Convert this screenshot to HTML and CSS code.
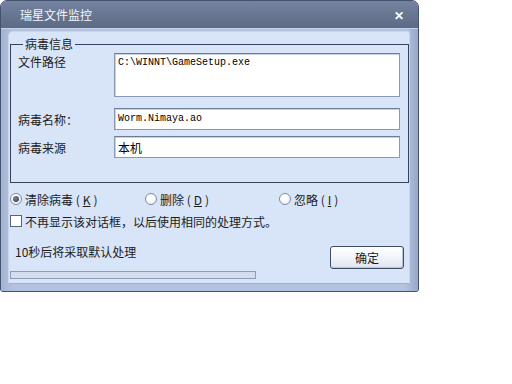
FILE: index.html
```html
<!DOCTYPE html>
<html lang="zh-CN">
<head>
	<meta charset="UTF-8">
	<title>瑞星文件监控</title>
	<link rel="stylesheet" href="styles.css">
</head>
<body>
	<div class="window">
		<div class="titlebar">
			<span class="title">瑞星文件监控</span>
			<span class="close">&#x2715;</span>
		</div>
		<div class="frame">
			<div class="client">

				<fieldset class="group">
					<legend>病毒信息</legend>
					<div class="row first">
						<label>文件路径</label>
						<div class="box tall">C:\WINNT\GameSetup.exe</div>
					</div>
					<div class="row mid">
						<label>病毒名称：</label>
						<div class="box">Worm.Nimaya.ao</div>
					</div>
					<div class="row mid">
						<label>病毒来源</label>
						<div class="box cn">本机</div>
					</div>
				</fieldset>

				<div class="choices">
					<div class="choice"><span class="radio on"></span>清除病毒 (<u>K</u>)</div>
					<div class="choice"><span class="radio"></span>删除 (<u>D</u>)</div>
					<div class="choice"><span class="radio"></span>忽略 (<u>I</u>)</div>
				</div>

				<div class="check"><span class="checkbox"></span>不再显示该对话框，以后使用相同的处理方式。</div>

				<div class="footer">
					<span class="countdown">10秒后将采取默认处理</span>
					<button class="ok">确定</button>
				</div>

				<div class="progress"><div class="fill"></div></div>

			</div>
		</div>
	</div>
</body>
</html>
```

FILE: styles.css
```css
*{margin:0;padding:0;box-sizing:border-box;}
body{background:#fff;font-family:"Noto Sans CJK SC","Noto Sans",sans-serif;font-size:12px;color:#1c1c1c;}

.window{width:419px;height:292px;background:#a9b9d6;border:1px solid #44536d;border-radius:7px 7px 3px 3px;overflow:hidden;display:flex;flex-direction:column;}

.titlebar{height:27px;background:linear-gradient(#7583a0,#5b6a85);display:flex;align-items:center;justify-content:space-between;padding:0 14px 0 19px;flex-shrink:0;}
.title{color:#f4f6fa;font-size:12px;}
.close{color:#fff;font-size:12px;font-weight:bold;}

.frame{flex:1;padding:2px 8px 7px 7px;background:linear-gradient(90deg,#a3b3d1,#b3c2de 3%,#b3c2de 97%,#97a8c8);border-top:1px solid #c4d1e8;}
.client{height:100%;background:#d8e4f8;border-radius:5px 3px 0 0;border:1px solid #c8d5ec;border-bottom-color:#9eafcd;padding:5px 0 0 1px;display:flex;flex-direction:column;}

.group{border:1px solid #34445f;margin:0;padding:2px 7px 24px 7px;width:399px;}
.group legend{margin-left:5px;padding:0 2px;line-height:14px;font-size:12px;}
.row{display:flex;align-items:flex-start;margin-bottom:6px;}
.row.first{margin-bottom:11px;}
.row label{width:96px;line-height:16px;padding-top:1px;}
.row.mid{align-items:center;}
.box{width:286px;height:22px;background:#fff;border:1px solid #8a99b3;border-top-color:#6c7b96;box-shadow:inset 1px 1px 0 #c9d1de;font-family:"Liberation Mono",monospace;font-size:10px;padding:4px 3px 0;color:#000;}
.box.tall{height:44px;padding-top:3px;}
.box.cn{font-family:"Noto Sans CJK SC",sans-serif;font-size:12px;padding-top:2px;}
.row:last-child{margin-bottom:0;}

.choices{display:flex;margin-top:8px;height:16px;align-items:center;}
.choice{display:flex;align-items:center;gap:3px;}
.choice:nth-child(1){width:135px;}
.choice:nth-child(2){width:134px;}
.choice u{text-decoration:underline;}
.radio{width:12px;height:12px;border-radius:50%;border:1px solid #7d8ba5;background:radial-gradient(circle at 40% 35%,#fff 30%,#dfe4ec);position:relative;}
.radio.on::after{content:"";position:absolute;left:2px;top:2px;width:6px;height:6px;border-radius:50%;background:radial-gradient(circle at 40% 35%,#7d8797,#2c3441);}

.check{display:flex;align-items:center;gap:3px;margin-top:6px;height:16px;}
.checkbox{width:12px;height:12px;border:1px solid #55647e;background:#fff;}

.footer{display:flex;justify-content:space-between;align-items:flex-start;margin-top:17px;padding:0 5px 0 5px;}
.countdown{line-height:12px;}
.ok{width:74px;height:23px;border:1px solid #3d4c67;border-radius:3px;background:linear-gradient(#fff,#f1f4f9 50%,#dde4f0);font-family:"Noto Sans CJK SC",sans-serif;font-size:12px;color:#1c1c1c;box-shadow:inset -1px -1px 0 #b9c4d8;}

.progress{margin-top:2px;width:246px;height:8px;border:1px solid #8e9cb7;background:#d2ddf0;}
.fill{height:100%;width:0;}
```
